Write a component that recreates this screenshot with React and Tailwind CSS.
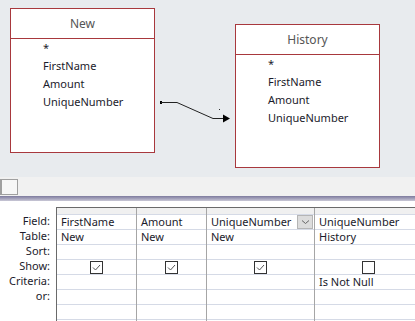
import React from "react";

const FIELDS = ["*", "FirstName", "Amount", "UniqueNumber"];

const COLUMNS = [
  { w: "w-[80px]", field: "FirstName", table: "New", show: true },
  { w: "w-[70px]", field: "Amount", table: "New", show: true },
  { w: "w-[108px]", field: "UniqueNumber", table: "New", show: true, active: true },
  { w: "w-[108px]", field: "UniqueNumber", table: "History", show: false, criteria: "Is Not Null" },
];

const LABELS = ["Field:", "Table:", "Sort:", "Show:", "Criteria:", "or:", ""];

function TableBox({ title, className }) {
  return (
    <div className={`absolute w-[145px] border border-[#a8383d] bg-white ${className}`}>
      <div className="h-[30px] border-b border-[#a8383d] flex items-center justify-center text-[12px] text-[#555]">
        {title}
      </div>
      <div className="pl-[32px] pb-[40px]">
        {FIELDS.map((f) => (
          <div key={f} className="h-[18px] leading-[18px] text-[11px] text-[#1b1b2b]">
            {f}
          </div>
        ))}
      </div>
    </div>
  );
}

function Checkbox({ checked }) {
  return (
    <div className="w-[13px] h-[13px] border border-[#333] bg-white flex items-center justify-center">
      {checked && (
        <svg width="11" height="11" viewBox="0 0 11 11">
          <path d="M2 5.5 L4.5 8 L9 3" fill="none" stroke="#555" strokeWidth="1" />
        </svg>
      )}
    </div>
  );
}

function Column({ col }) {
  const cell = "h-[15px] border-b border-[#d5dae6] flex items-center px-[4px] whitespace-nowrap";
  return (
    <div className={`${col.w} shrink-0 border-r border-[#a6a6a6] flex flex-col`}>
      <div className="h-[7px] bg-[#f0f0f0] border-b border-[#d5dae6]" />
      <div className={`${cell} justify-between pr-[1px]`}>
        <span>{col.field}</span>
        {col.active && (
          <span className="w-[16px] h-[14px] bg-[#dcdcdc] border border-[#b5b5b5] flex items-center justify-center">
            <svg width="9" height="6" viewBox="0 0 9 6">
              <path d="M1 1.5 L4.5 4.5 L8 1.5" fill="none" stroke="#666" strokeWidth="1" />
            </svg>
          </span>
        )}
      </div>
      <div className={cell}>{col.table}</div>
      <div className={cell} />
      <div className={`${cell} justify-center`}>
        <Checkbox checked={col.show} />
      </div>
      <div className={cell}>{col.criteria || ""}</div>
      <div className={cell} />
      <div className={cell} />
      <div className="h-[10px]" />
    </div>
  );
}

export default function App() {
  return (
    <div className="w-[415px] h-[321px] overflow-hidden bg-white font-['Noto_Sans',sans-serif] flex flex-col">
      <div className="relative h-[177px] shrink-0 bg-[#e8ebee]">
        <TableBox title="New" className="left-[10px] top-[8px] h-[145px]" />
        <TableBox title="History" className="left-[235px] top-[24px] h-[144px]" />
        <svg className="absolute left-0 top-0" width="415" height="177">
          <rect x="160" y="101" width="2" height="3" fill="#000" />
          <polyline points="161,102.5 177,102.5 213,118.5 225,118.5" fill="none" stroke="#222" strokeWidth="1" />
          <path d="M223 114.5 L230 118.5 L223 122.5 Z" fill="#000" />
          <rect x="219" y="109" width="1" height="1" fill="#333" />
        </svg>
      </div>
      <div className="h-[19px] shrink-0 bg-[#f1f1f1] flex items-center">
        <div className="w-[18px] h-[16px] border border-[#a0a0a0] border-l-[2px] bg-[#f7f7f7]" />
      </div>
      <div className="h-[5px] shrink-0 bg-gradient-to-b from-[#7e7b9e] to-[#c9c8d6]" />
      <div className="flex-1 pt-[6px] flex text-[11px] text-[#1b1b2b]">
        <div className="w-[56px] shrink-0 flex flex-col items-end pr-[6px] pt-[7px]">
          {LABELS.map((l, i) => (
            <div key={i} className="h-[15px] flex items-center">
              {l}
            </div>
          ))}
        </div>
        <div className="flex border-l border-t border-[#6a6a6a] self-start">
          {COLUMNS.map((c, i) => (
            <Column key={i} col={c} />
          ))}
        </div>
      </div>
    </div>
  );
}
